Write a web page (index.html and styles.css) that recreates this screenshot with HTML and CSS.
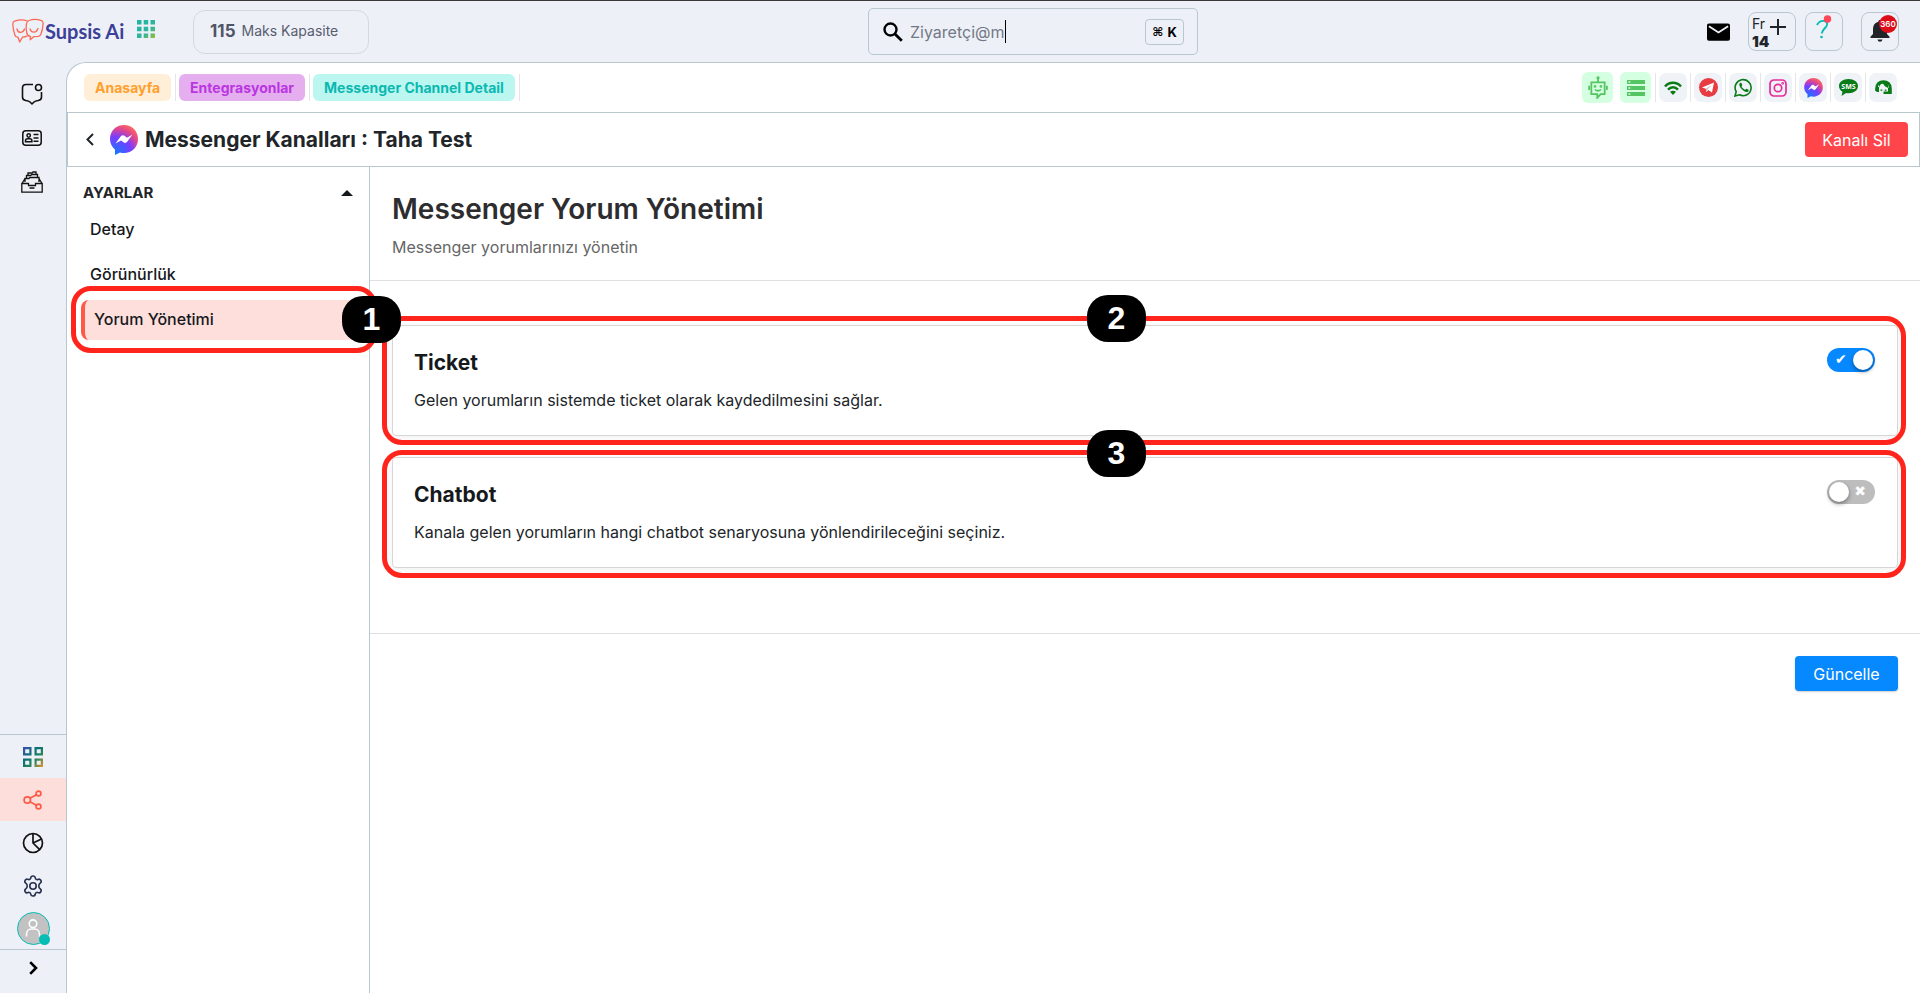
FILE: index.html
```html
<!DOCTYPE html>
<html lang="tr">
<head>
<meta charset="utf-8">
<meta name="viewport" content="width=device-width, initial-scale=1">
<title>Messenger Yorum Yönetimi</title>
<link rel="stylesheet" href="styles.css">
</head>
<body>
<svg class="defs" width="0" height="0" aria-hidden="true">
  <defs>
    <radialGradient id="msg" cx="20%" cy="100%" r="110%">
      <stop offset="0" stop-color="#0a7cff"/><stop offset=".55" stop-color="#7a3dff"/><stop offset=".8" stop-color="#e0458f"/><stop offset="1" stop-color="#ff6a5c"/>
    </radialGradient>
    <linearGradient id="apps" gradientUnits="userSpaceOnUse" x1="2" y1="0" x2="18" y2="18">
      <stop offset="0" stop-color="#1fb5a8"/><stop offset=".6" stop-color="#2fb59a"/><stop offset="1" stop-color="#9abf35"/>
    </linearGradient>
    <linearGradient id="tiles" gradientUnits="userSpaceOnUse" x1="0" y1="0" x2="20" y2="20">
      <stop offset="0" stop-color="#3d4bb5"/><stop offset=".4" stop-color="#0b7273"/><stop offset=".65" stop-color="#27855a"/><stop offset="1" stop-color="#f0912c"/>
    </linearGradient>
    <symbol id="messenger" viewBox="0 0 28 30">
      <path fill="url(#msg)" d="M14 0C6 0 0 6 0 14c0 4.500 2 8 5 10.500V30l5-2.600c1.300.400 2.600.600 4 .600 8 0 14-6 14-14S22 0 14 0z"/>
      <path fill="#fff" d="M5.500 18.500l5.300-7.200c1-1.300 2.400-1.500 3.700-.500l2.500 1.900 5.500-3.200-5.300 7.300c-1 1.300-2.400 1.500-3.700.500l-2.500-1.900z"/>
    </symbol>
  </defs>
</svg>

<header class="topbar">
  <a class="brand" href="#">
    <svg width="32" height="25" viewBox="0 0 32 25" fill="none" stroke="#fb6a57" stroke-width="1.300" stroke-linejoin="round" stroke-linecap="round">
      <path d="M15 3C11 1 6 2 2.500 3.200 1 3.700.700 5 .800 6.500c.300 4 1 7.500 2.200 11 .400 1.200 1.500 1.700 3 1.700L7.700 24l2.800-4.800c1.500-.100 3-.300 4.500-1"/>
      <path d="M17 2.500c4.500-1.800 8.500-1.300 12.500.2 1.300.500 1.700 1.500 1.600 3-.200 4-.900 7.500-2.300 10.800-.500 1.200-1.400 1.700-2.800 1.900l-4 .200-3.800 3.200.200-3.400c-2-.400-3.200-1.500-3.600-3.400-.700-3-.800-6-.400-9 .300-1.900 1-2.900 2.600-3.500z"/>
      <path d="M5 11c1 4.500 6 4.500 7.500 0M18 11c1.500 4.500 6.500 4 8-.500"/>
    </svg>
    <span>Supsis Ai</span>
  </a>
  <button class="plain apps" type="button" aria-label="Uygulamalar">
    <svg width="18" height="18" viewBox="0 0 18 18" fill="url(#apps)"><path d="M0 0h4.500v4.500H0zM6.700 0h4.500v4.500H6.700zM13.500 0H18v4.500h-4.500zM0 6.700h4.500v4.500H0zM6.700 6.700h4.500v4.500H6.700zM13.500 6.700H18v4.500h-4.500zM0 13.500h4.500V18H0zM6.700 13.500h4.500V18H6.700zM13.500 13.500H18V18h-4.500z"/></svg>
  </button>
  <div class="capacity"><strong>115</strong><span>Maks Kapasite</span></div>

  <label class="search">
    <svg width="20" height="20" viewBox="0 0 20 20" fill="none" stroke="#000"><circle cx="7.500" cy="7.500" r="6" stroke-width="2.400"/><path d="M12 12l6.800 6.800" stroke-width="2.800"/></svg>
    <input class="search-input" type="text" value="Ziyaretçi@m" aria-label="Ara">
    <span class="caret"></span>
    <kbd class="key"><span class="cmd">⌘</span>K</kbd>
  </label>

  <div class="actions">
    <button class="plain mail" type="button" aria-label="E-posta">
      <svg width="23" height="18" viewBox="0 0 24 18"><rect width="24" height="18" rx="2" fill="#000"/><path d="M2 3l10 6.500L22 3" fill="none" stroke="#edf0f6" stroke-width="2"/></svg>
    </button>
    <button class="tile date" type="button" aria-label="Takvim">
      <span class="date-text"><span>Fr</span><b>14</b></span>
      <svg width="16" height="20" viewBox="0 0 16 20" stroke="#212529" stroke-width="2"><path d="M8 4v16M0 12h16"/></svg>
    </button>
    <button class="tile help" type="button" aria-label="Yardım">
      <svg width="18" height="26" viewBox="0 0 18 26" fill="none"><path d="M2 10c2-4 5-4.500 7.500-4 3 .6 3.500 3.500 1.500 6-2 2-4 3.500-4.200 6.500" stroke="#06bdb5" stroke-width="1.900"/><circle cx="6.500" cy="22" r="1.300" fill="#06bdb5"/><circle cx="12.500" cy="4" r="3.700" fill="#ff4558"/></svg>
    </button>
    <button class="tile bell" type="button" aria-label="Bildirimler">
      <svg width="20" height="22" viewBox="0 0 20 22" fill="#212529"><path d="M10 0c-1 0-1.600.700-1.600 1.700C4.800 2.500 3 5.300 3 9v5l-2.500 2.700V18h19v-1.300L17 14V9c0-3.700-1.800-6.500-5.400-7.300C11.600.700 11 0 10 0zM7.500 19.500c.400 1.500 1.300 2.200 2.500 2.200s2.100-.700 2.500-2.200z"/></svg>
      <span class="count">360</span>
    </button>
  </div>
</header>

<div class="shell">
  <nav class="rail" aria-label="Ana menü">
    <div class="rail-top">
      <a href="#" aria-label="Sohbetler"><svg width="22" height="22" viewBox="0 0 22 22" fill="none" stroke="#111" stroke-width="1.600" stroke-linejoin="round"><path d="M12 1.500H5c-2.300 0-3.500 1.200-3.500 3.500v9c0 2.300 1 3.200 3.200 3.500 2 .300 3.300.500 4.300 1.500l2 2 2-2c1-1 2.300-1.200 4.300-1.500 2.200-.300 3.200-1.200 3.200-3.500V9"/><circle cx="17.500" cy="4.500" r="3"/></svg></a>
      <a href="#" aria-label="Kişiler"><svg width="20" height="16" viewBox="0 0 20 16" fill="none" stroke="#111" stroke-width="1.500"><rect x=".8" y=".8" width="18.400" height="14.400" rx="3"/><circle cx="6.700" cy="5.500" r="1.700"/><path d="M3.500 11.800v-1c0-1.300 1-2 2.200-2h2c1.200 0 2.200.700 2.200 2v1zM11.500 4.500h5M11.500 8h5M11.500 11.300h5"/></svg></a>
      <a href="#" aria-label="Arşiv"><svg width="22" height="22" viewBox="0 0 22 22" fill="none" stroke="#111" stroke-width="1.300"><path d="M.8 12.500h6.700v2h7v-2h6.700v8.700H.8zM1 12.500L4 7.500M21 12.500L18 7.500M4 11V7.500h4l1-1h9V11M5.500 7V4.500h4l1.500-1h5.500v3M7 4V2h4l1-1h3v2.500M8.500 17h5"/></svg></a>
    </div>
    <div class="rail-bottom">
      <a href="#" aria-label="Paneller"><svg width="20" height="20" viewBox="0 0 20 20" fill="none" stroke="url(#tiles)" stroke-width="2.200"><path d="M1.100 1.100h6.300v6.300H1.100zM12.600 1.100h6.300v6.300h-6.300zM1.100 12.600h6.300v6.300H1.100zM12.600 12.600h6.300v6.300h-6.300z"/></svg></a>
      <a class="current" href="#" aria-label="Entegrasyonlar"><svg width="20" height="20" viewBox="0 0 20 20" fill="none" stroke="#ff5a45" stroke-width="1.700"><circle cx="4.300" cy="10" r="3.200"/><circle cx="15.500" cy="3.500" r="2.400"/><circle cx="15.500" cy="16.500" r="2.400"/><path d="M7 8.200l6.300-3.500M7 11.800l6.300 3.500"/></svg></a>
      <a href="#" aria-label="Raporlar"><svg width="22" height="22" viewBox="0 0 22 22" fill="none" stroke="#111" stroke-width="1.700"><circle cx="11" cy="11" r="9.500"/><path d="M11 1.500V11l6.700 6.700M11 11l8.500-4"/></svg></a>
      <a href="#" aria-label="Ayarlar"><svg width="22" height="22" viewBox="0 0 22 22" fill="none" stroke="#27304f" stroke-width="1.600" stroke-linejoin="round"><path d="M8.700 3c.4-2.700 4.200-2.700 4.600 0 .2 1.200 1.500 1.900 2.600 1.400 2.500-1.200 4.500 2.200 2.300 3.800-1.900 1.400-1.900 4.200 0 5.600 2.200 1.600.200 5-2.300 3.800-1.100-.5-2.400.2-2.600 1.400-.4 2.700-4.200 2.700-4.600 0-.2-1.200-1.500-1.900-2.600-1.400-2.500 1.200-4.500-2.200-2.300-3.800 1.900-1.400 1.900-4.200 0-5.600-2.200-1.600-.2-5 2.300-3.800C7.200 4.900 8.500 4.200 8.700 3z"/><circle cx="11" cy="11" r="3.200"/></svg></a>
      <a class="avatar-link" href="#" aria-label="Profil"><span class="avatar"><svg width="18" height="21" viewBox="0 0 22 26" fill="none" stroke="#fff" stroke-width="1.900"><circle cx="11" cy="7" r="4.700"/><path d="M3 23v-3c0-3.500 2.500-6.500 6-6.500h4c3.500 0 6 3 6 6.500v3"/></svg><i class="online"></i></span></a>
      <button class="plain expand" type="button" aria-label="Menüyü genişlet"><svg width="9" height="14" viewBox="0 0 9 14" fill="none" stroke="#000" stroke-width="2.600"><path d="M1.200 1.200L7 7l-5.800 5.800"/></svg></button>
    </div>
  </nav>

  <main class="page">
    <div class="tabs">
      <nav class="crumbs" aria-label="Sekmeler">
        <span class="slot"><a class="crumb home" href="#">Anasayfa</a></span>
        <span class="slot"><a class="crumb integrations" href="#">Entegrasyonlar</a></span>
        <span class="slot"><a class="crumb detail" href="#">Messenger Channel Detail</a></span>
      </nav>
      <div class="channels">
        <span class="state"><svg width="20" height="23" viewBox="0 0 27 31" fill="none" stroke="#55c462" stroke-width="2.400"><path d="M4.500 8.500h18v16H17l-4.500 5v-5h-8zM13.500 8V3M1.500 13v6M25.500 13v6M9.500 18c1.500 2.500 6.500 2.500 8 0"/><circle cx="13.500" cy="2.500" r="1" fill="#55c462"/><circle cx="9.500" cy="14" r=".7"/><circle cx="17.500" cy="14" r=".7"/></svg></span>
        <span class="state"><svg width="18" height="16" viewBox="0 0 18 16"><path fill="#55c462" d="M0 0h18v4H0zM0 6h18v4H0zM0 12h18v4H0z"/><path fill="#d4ffe0" d="M1.500 1.200h1.800v1.600H1.500zM1.500 7.200h1.800v1.600H1.500zM1.500 13.200h1.800v1.600H1.500z"/></svg></span>
        <span class="channel"><svg width="18" height="14" viewBox="0 0 18 14" fill="none" stroke="#087a16" stroke-width="2.500"><path d="M1 5.500C5.500.600 12.500.600 17 5.500M4 8.600c3-3 7-3 10 0"/><path d="M6 10.800c2-1.500 4-1.500 6 0L9 14z" fill="#087a16" stroke="none"/></svg></span>
        <span class="channel"><svg width="19" height="19" viewBox="0 0 19 19"><circle cx="9.500" cy="9.500" r="9.500" fill="#e73c41"/><path fill="#fff" d="M3 9.500L15 4.500l-2 10-3.700-2.400-2 2-.5-3.400z"/><path fill="#d7b8bc" d="M6.800 10.700L12.500 7l-4.200 4.700-1 2.400z"/></svg></span>
        <span class="channel"><svg width="19" height="19" viewBox="0 0 19 19"><path fill="none" stroke="#087a16" stroke-width="1.600" d="M1 18l1.200-4.300A8 8 0 1 1 5.500 16.800z"/><path fill="#087a16" d="M6.300 4.800c-1.700 1-1.200 3.300.8 5.700s5 4.300 6.700 3.200c1.200-.8 1-1.800.7-2l-2-1c-.6-.2-1 1.200-1.600 1-1.500-.6-2.700-1.800-3.300-3.100-.2-.5.800-.9.700-1.500l-.9-2.100c-.2-.4-.7-.4-1.100-.2z"/></svg></span>
        <span class="channel"><svg width="18" height="18" viewBox="0 0 18 18" fill="none" stroke="#e72a9b" stroke-width="1.700"><rect x="1" y="1" width="16" height="16" rx="4"/><circle cx="9" cy="9" r="3.700"/><circle cx="13.700" cy="4.300" r=".5"/></svg></span>
        <span class="channel"><svg width="19" height="20"><use href="#messenger"/></svg></span>
        <span class="channel"><svg width="19" height="17" viewBox="0 0 19 17"><path fill="#087a16" d="M9.500 0C4 0 0 3 0 7c0 2.500 1.300 4.500 3.500 5.800L2.500 17l4.500-3c6.500 1 12-2 12-7 0-4-4-7-9.500-7z"/><text class="sms" x="9.500" y="9.700" text-anchor="middle">SMS</text></svg></span>
        <span class="channel"><svg width="17" height="15" viewBox="0 0 17 15"><path fill="none" stroke="#087a16" stroke-width="2.600" d="M1.500 11V8.500C1.500 4 4.500 1.500 8.500 1.500s7 2.500 7 7v4.200H8.500"/><path fill="#087a16" d="M1 7h3v5H2.500C1 12 .500 11 1 7zM13 7h3v5h-3zM4 7.500C5 3.500 8 2.500 9 5c1 2 3 2 4.500 3V4L9 1.500 4 3zM5.500 9.500h1.800v1.300H5.500zM9.700 9.500h1.800v1.300H9.700z"/></svg></span>
      </div>
    </div>

    <div class="titlebar">
      <button class="plain back" type="button" aria-label="Geri"><svg width="8" height="13" viewBox="0 0 8 13" fill="none" stroke="#212529" stroke-width="2"><path d="M7 1L1.500 6.500 7 12"/></svg></button>
      <svg width="28" height="30" aria-hidden="true"><use href="#messenger"/></svg>
      <h1>Messenger Kanalları : Taha Test</h1>
      <button class="btn danger" type="button">Kanalı Sil</button>
    </div>

    <div class="body">
      <aside class="settings">
        <button class="plain group" type="button" aria-expanded="true">AYARLAR<i class="up"></i></button>
        <a class="item" href="#">Detay</a>
        <a class="item" href="#">Görünürlük</a>
        <div class="marked">
          <a class="item selected" href="#">Yorum Yönetimi</a>
          <div class="outline outline-menu"></div>
          <span class="pin pin-menu">1</span>
        </div>
      </aside>

      <section class="content">
        <div class="intro">
          <h2>Messenger Yorum Yönetimi</h2>
          <p>Messenger yorumlarınızı yönetin</p>
        </div>
        <div class="cards">
          <div class="card">
            <div>
              <h3 id="ticket">Ticket</h3>
              <p>Gelen yorumların sistemde ticket olarak kaydedilmesini sağlar.</p>
            </div>
            <input class="switch" type="checkbox" role="switch" aria-labelledby="ticket" checked>
            <div class="outline outline-first"></div>
            <span class="pin pin-first">2</span>
          </div>
          <div class="card">
            <div>
              <h3 id="chatbot">Chatbot</h3>
              <p>Kanala gelen yorumların hangi chatbot senaryosuna yönlendirileceğini seçiniz.</p>
            </div>
            <input class="switch" type="checkbox" role="switch" aria-labelledby="chatbot">
            <div class="outline outline-second"></div>
            <span class="pin pin-second">3</span>
          </div>
        </div>
        <div class="footer"><button class="btn primary" type="button">Güncelle</button></div>
      </section>
    </div>
  </main>
</div>
</body>
</html>
```

FILE: styles.css
```css
:root {
  --line: #b9c8cf;
  --ground: #edf0f6;
  --mark: #ff241c;
}
* { box-sizing: border-box; }
body {
  margin: 0;
  min-height: 100vh;
  display: flex;
  flex-direction: column;
  background: var(--ground);
  border-top: 1px solid #3a3938;
  color: #212529;
  font-family: Inter, "Noto Sans", sans-serif;
  font-size: 16px;
  line-height: 24px;
}
svg { display: block; flex: none; }
.defs { position: absolute; }
h1, h2, h3, p { margin: 0; }
a { color: inherit; text-decoration: none; }
button { font: inherit; color: inherit; cursor: pointer; }
.plain { border: 0; background: none; padding: 0; }

/* Top bar */
.topbar {
  display: grid;
  grid-template-columns: auto auto auto 1fr auto;
  align-items: center;
  height: 61px;
  padding: 0 21px 0 12px;
}
.brand {
  display: flex;
  align-items: center;
  gap: 1px;
  padding-bottom: 2px;
  color: #3c4098;
  font: 700 20px/24px Lato, sans-serif;
}
.brand span { width: 92px; }
.apps { margin-bottom: 6px; }
.capacity {
  display: flex;
  align-items: center;
  gap: 6px;
  width: 176px;
  height: 44px;
  margin-left: 38px;
  padding: 0 0 2px 16px;
  border: 1px solid #d6d8da;
  border-radius: 12px;
  color: #585d70;
  font-size: 14px;
}
.capacity strong { font-size: 17px; color: #4f5467; }
.search {
  justify-self: center;
  display: flex;
  align-items: center;
  width: 330px;
  height: 47px;
  margin-right: 10px;
  padding: 0 13px 0 14px;
  border: 1px solid var(--line);
  border-radius: 5px;
}
.search-input {
  field-sizing: content;
  margin-left: 7px;
  padding: 0;
  border: 0;
  outline: 0;
  background: none;
  color: #737887;
  font: 16px/24px Inter, sans-serif;
}
.caret { width: 1px; height: 23px; margin-left: 1px; background: #000; }
.key {
  display: flex;
  align-items: center;
  justify-content: center;
  gap: 4px;
  width: 39px;
  height: 26px;
  margin-left: auto;
  border: 1px solid var(--line);
  border-radius: 4px;
  color: #000;
  font: 700 13px/24px Inter, sans-serif;
}
.cmd { font-family: "DejaVu Sans", sans-serif; font-size: 12px; }
.actions { display: flex; align-items: center; }
.mail { margin-right: 18px; }
.tile {
  position: relative;
  display: flex;
  align-items: center;
  justify-content: center;
  width: 38px;
  height: 39px;
  margin-right: 9px;
  padding: 0;
  border: 1px solid var(--line);
  border-radius: 8px;
  background: none;
}
.date { width: 48px; align-items: flex-start; justify-content: flex-start; gap: 1px; padding: 2px 0 0 3px; }
.date-text { display: flex; flex-direction: column; align-items: flex-start; line-height: 18px; font-size: 14px; }
.date-text b { font-size: 15px; font-weight: 900; line-height: 18px; }
.help { margin-right: 18px; align-items: flex-start; padding-top: 2px; }
.bell { margin-right: 0; padding-bottom: 1px; }
.count {
  position: absolute;
  top: 2px;
  right: 1px;
  width: 18px;
  height: 18px;
  border-radius: 50%;
  background: #dc0d18;
  color: #fff;
  font-size: 8px;
  font-weight: 600;
  line-height: 18px;
  text-align: center;
}

/* Frame */
.shell { flex: 1; display: flex; }
.rail { width: 66px; display: flex; flex-direction: column; justify-content: space-between; }
.rail-top { display: flex; flex-direction: column; align-items: center; gap: 25px; padding: 21px 2px 0 0; }
.rail-bottom { display: flex; flex-direction: column; border-top: 1px solid var(--line); }
.rail-bottom a { display: grid; place-items: center; height: 43px; }
.rail-bottom .current { background: #fddedb; }
.avatar {
  position: relative;
  display: grid;
  place-items: center;
  width: 33px;
  height: 33px;
  border: 1px solid #06bdb5;
  border-radius: 50%;
  background: #c2c2c2;
}
.rail-bottom .avatar-link { height: 42px; }
.online { position: absolute; right: -1px; bottom: -1px; width: 11px; height: 11px; border-radius: 50%; background: #06bdb5; }
.expand { display: grid; place-items: center; height: 44px; padding-bottom: 8px; border-top: 1px solid var(--line); }
.page {
  flex: 1;
  min-width: 0;
  display: flex;
  flex-direction: column;
  background: #fff;
  border: 1px solid var(--line);
  border-width: 1px 0 0 1px;
  border-top-left-radius: 20px;
}

/* Tabs and channel states */
.tabs { display: flex; align-items: center; justify-content: space-between; height: 49px; padding: 0 23px 0 17px; }
.crumbs { display: flex; align-self: flex-start; padding-top: 11px; gap: 3px; }
.slot { padding-right: 4px; border-right: 1px solid #e3e5e8; }
.crumb { display: block; padding: 0 11px; border-radius: 6px; font-size: 14px; font-weight: 700; line-height: 27px; }
.home { background: #ffefd9; color: #ff9f2d; }
.integrations { background: #e5aeef; color: #b936e0; }
.detail { background: #bbf6f1; color: #0bb9b0; }
.channels { display: flex; align-items: center; }
.state { display: grid; place-items: center; width: 31px; height: 31px; margin-right: 7px; border-radius: 6px; background: #d4ffe0; }
.channel { position: relative; display: grid; place-items: center; width: 28px; height: 29px; border-radius: 7px; background: #eff3f7; }
.channel + .channel { margin-left: 7px; }
.state + .channel { margin-left: 1px; }
.channel::before { content: ""; position: absolute; left: -4px; width: 1px; height: 29px; background: #e3e5e8; }
.sms { fill: #fff; font: 700 7px "Noto Sans", sans-serif; }

/* Title */
.titlebar { display: flex; align-items: center; height: 55px; padding: 0 11px 0 18px; border: 1px solid var(--line); }
.back { margin-right: 16px; }
.titlebar h1 { margin-left: 7px; font-size: 21px; font-weight: 700; }
.btn { height: 35px; padding: 0; width: 103px; border: 0; border-radius: 4px; color: #fff; font-size: 16px; }
.danger { margin-left: auto; background: #ff444a; }
.primary { background: #0688ff; box-shadow: 0 1px 2px #0003; }

/* Settings list */
.body { flex: 1; display: flex; }
.settings { width: 303px; padding: 14px 0 0 14px; border-right: 1px solid var(--line); }
.group { display: flex; align-items: center; justify-content: space-between; width: 100%; padding: 0 16px 0 2px; font-size: 15px; font-weight: 700; }
.up { border: 6px solid transparent; border-top: 0; border-bottom: 6px solid #16191c; }
.item { display: block; height: 41px; margin-bottom: 4px; padding-left: 9px; color: #16191c; font-weight: 500; line-height: 41px; }
.group + .item { margin-top: 4px; }
.marked { position: relative; margin-top: 5px; }
.selected { height: 40px; border-left: 4px solid #ff5845; border-radius: 8px 0 0 8px; background: #ffdfdc; line-height: 39px; }

/* Content */
.content { flex: 1; min-width: 0; }
.intro { padding: 24px 22px 21px; border-bottom: 1px solid #e0e0e0; }
.intro h2 { color: #2d2d2f; font-size: 28px; font-weight: 600; line-height: 36px; }
.intro p { margin-top: 8px; color: #666; }
.cards { display: flex; flex-direction: column; gap: 21px; padding: 44px 22px 65px; }
.card {
  position: relative;
  display: flex;
  justify-content: space-between;
  height: 111px;
  padding: 22px 22px 22px 21px;
  border: 1px solid #d6d6d6;
  border-radius: 4px;
  box-shadow: 0 2px 8px #0000000f;
}
.card h3 { margin-top: 2px; font-size: 21px; font-weight: 700; line-height: 26px; color: #16191c; }
.card p { margin-top: 12px; }
.switch {
  appearance: none;
  position: relative;
  flex: none;
  width: 48px;
  height: 24px;
  margin: 0;
  border-radius: 12px;
  background: #bdbdbd;
  color: #fff;
}
.switch::before { content: ""; position: absolute; left: 2px; top: 2px; width: 20px; height: 20px; border-radius: 50%; background: #fff; box-shadow: 0 2px 4px #0006; }
.switch::after { content: "✖"; position: absolute; right: 9px; font: 14px/23px "DejaVu Sans", sans-serif; }
.switch:checked { background: #0688ff; }
.switch:checked::before { left: 26px; }
.switch:checked::after { content: "✔"; left: 8px; right: auto; }
.footer { display: flex; justify-content: flex-end; padding: 22px; border-top: 1px solid #e0e0e0; }

/* Numbered callouts over the page */
.outline { position: absolute; border: 5px solid var(--mark); border-radius: 20px; pointer-events: none; z-index: 1; }
.outline-menu { inset: -14px -8px -13px -10px; }
.outline-first { inset: -10px -9px -10px -11px; }
.outline-second { inset: -8px -9px -11px -11px; }
.pin {
  position: absolute;
  z-index: 3;
  width: 59px;
  height: 47px;
  border-radius: 21px;
  background: #000;
  color: #fff;
  font: 700 32px/47px "Liberation Sans", sans-serif;
  text-align: center;
}
.pin-menu { right: -32px; top: -4px; }
.pin-first { left: calc(46% + 2px); top: -31px; }
.pin-second { left: calc(46% + 2px); top: -28px; }
```
